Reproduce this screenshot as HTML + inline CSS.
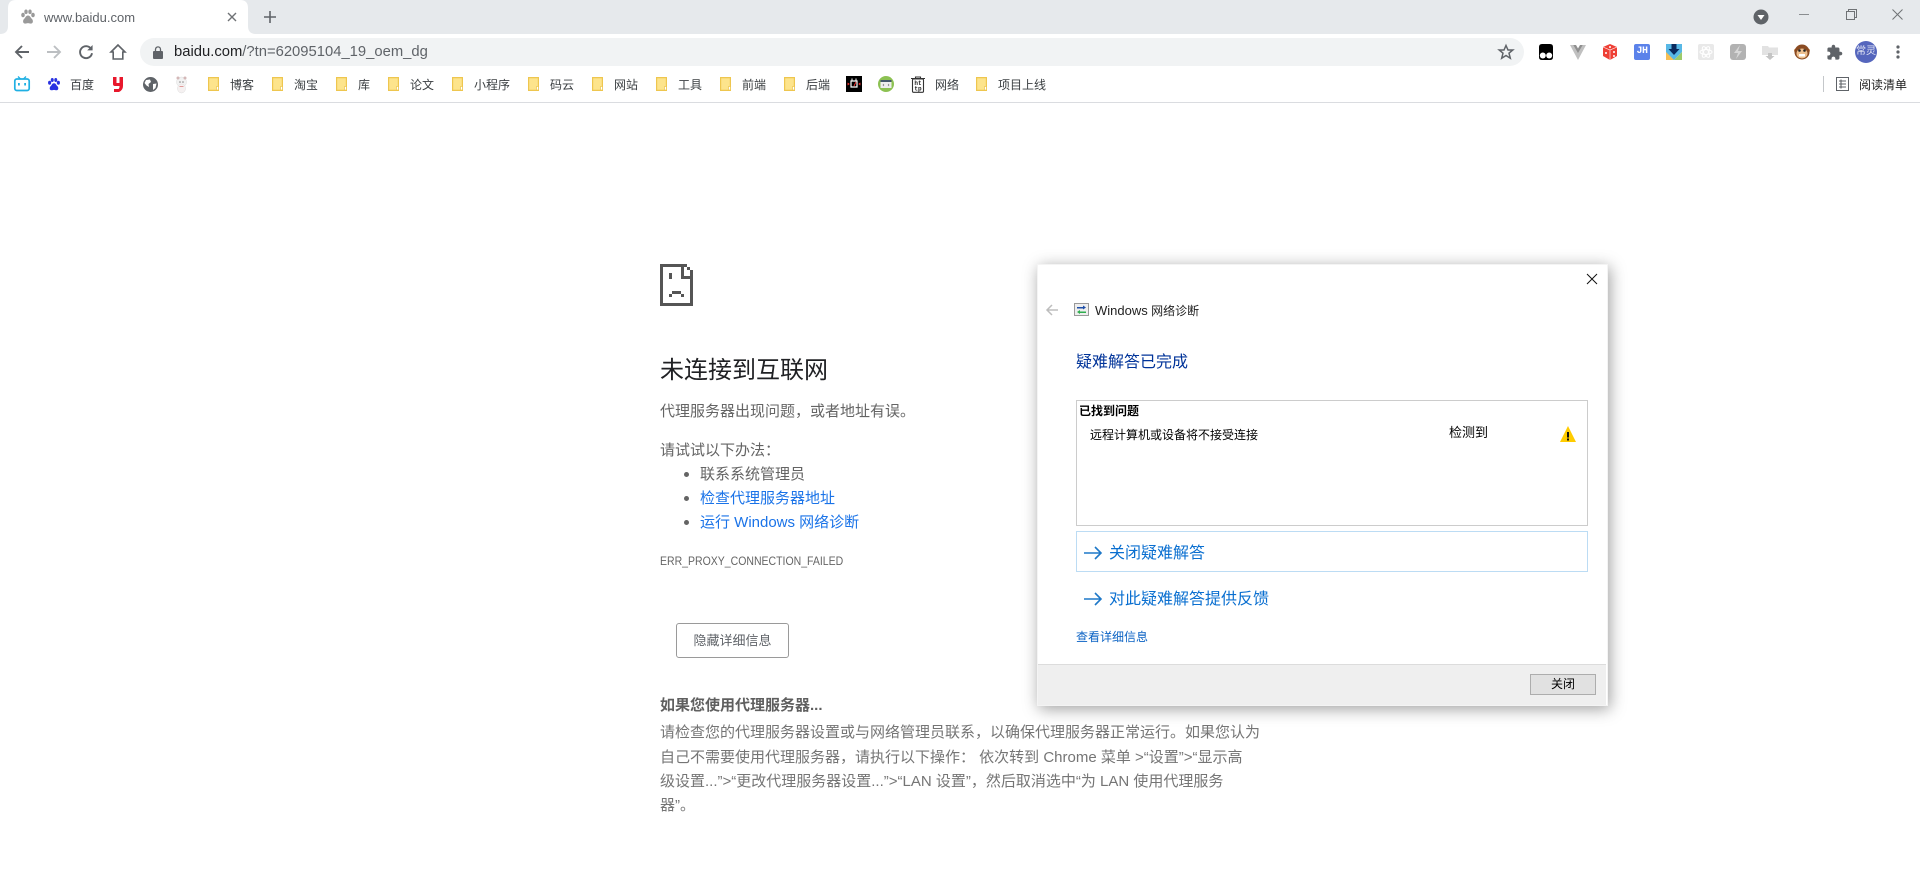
<!DOCTYPE html>
<html lang="zh-CN">
<head>
<meta charset="utf-8">
<title>www.baidu.com</title>
<style>
html,body{margin:0;padding:0;width:1920px;height:871px;overflow:hidden;background:#fff;}
body{position:relative;font-family:"Liberation Sans","Noto Sans CJK SC",sans-serif;color:#333;}
.a{position:absolute;}
.t{position:absolute;white-space:nowrap;line-height:20px;height:20px;}
.b{font-size:12px;color:#3c4043;top:75px;}
svg{position:absolute;overflow:visible;display:block;}
.f{position:absolute;top:77px;width:11px;height:14px;}
.g{color:#646464;font-size:15px;}
.l{color:#1a73e8;}
.p{font-size:15px;color:#757575;left:660px;}
</style>
</head>
<body>
<!-- tab strip -->
<div class="a" style="left:0;top:0;width:1920px;height:34px;background:#e6e9ec"></div>
<svg style="left:0;top:0" width="260" height="34"><path d="M0 34Q8 34 8 26V8Q8 0 16 0H240Q248 0 248 8V26Q248 34 256 34Z" fill="#fff"/></svg>
<!-- favicon paw -->
<svg style="left:20px;top:9px" width="16" height="16" viewBox="0 0 16 16" fill="#9a9a9a"><ellipse cx="3" cy="6" rx="1.8" ry="2.3"/><ellipse cx="6" cy="2.8" rx="1.7" ry="2.3"/><ellipse cx="10" cy="2.8" rx="1.7" ry="2.3"/><ellipse cx="13" cy="6" rx="1.8" ry="2.3"/><path d="M8 6.5C5.8 6.500 5.600 8.600 4.200 9.800 2.600 11.200 2.600 14.500 5 14.600 6.200 14.700 6.800 14.100 8 14.100 9.200 14.100 9.800 14.700 11 14.600 13.400 14.500 13.400 11.200 11.800 9.800 10.400 8.600 10.200 6.500 8 6.500Z"/></svg>
<div class="t" style="left:44px;top:8px;font-size:13px;color:#5f6368">www.baidu.com</div>
<svg style="left:227px;top:12px" width="10" height="10" viewBox="0 0 10 10"><path d="M1 1L9 9M9 1L1 9" stroke="#6f7275" stroke-width="1.4"/></svg>
<svg style="left:264px;top:11px" width="12" height="12" viewBox="0 0 12 12"><path d="M6 0V12M0 6H12" stroke="#5f6368" stroke-width="1.6"/></svg>
<!-- window controls -->
<svg style="left:1753px;top:9px" width="16" height="16" viewBox="0 0 16 16"><circle cx="8" cy="8" r="7.5" fill="#5f6368"/><path d="M4.5 6H11.5L8 11Z" fill="#fff"/></svg>
<div class="a" style="left:1799px;top:14px;width:10px;height:1px;background:#8a8d90"></div>
<svg style="left:1846px;top:9px" width="11" height="11" viewBox="0 0 11 11" fill="none" stroke="#6f7275"><rect x=".5" y="2.5" width="8" height="8"/><path d="M2.5 2.5V.5H10.5V8.5H8.5"/></svg>
<svg style="left:1892px;top:9px" width="11" height="11" viewBox="0 0 11 11"><path d="M.5 .5L10.5 10.5M10.5 .5L.5 10.5" stroke="#6f7275"/></svg>
<!-- toolbar -->
<svg style="left:14px;top:44px" width="16" height="16" viewBox="0 0 16 16"><path d="M15 8H2M8 2L2 8L8 14" fill="none" stroke="#5f6368" stroke-width="1.9"/></svg>
<svg style="left:46px;top:44px" width="16" height="16" viewBox="0 0 16 16"><path d="M1 8H14M8 2L14 8L8 14" fill="none" stroke="#bcbfc2" stroke-width="1.9"/></svg>
<svg style="left:78px;top:44px" width="16" height="16" viewBox="0 0 16 16"><path d="M13.200 5A6 6 0 1 0 14 9.200" fill="none" stroke="#5f6368" stroke-width="1.9"/><path d="M14.600 1V6.400H9.200Z" fill="#5f6368"/></svg>
<svg style="left:110px;top:44px" width="16" height="16" viewBox="0 0 16 16"><path d="M8 1L1 8H3.200V15H12.800V8H15Z" fill="none" stroke="#5f6368" stroke-width="1.6"/></svg>
<div class="a" style="left:140px;top:38px;width:1384px;height:28px;border-radius:14px;background:#f1f3f4"></div>
<svg style="left:153px;top:46px" width="10" height="13" viewBox="0 0 10 13"><rect x="0" y="5" width="10" height="8" rx="1" fill="#5f6368"/><path d="M2.500 5.500V3.400A2.500 2.500 0 0 1 7.500 3.400V5.500" fill="none" stroke="#5f6368" stroke-width="1.3"/></svg>
<div class="t" style="left:174px;top:42px;font-size:14.8px;color:#5f6368"><span style="color:#202124">baidu.com</span>/?tn=62095104_19_oem_dg</div>
<svg style="left:1498px;top:44px" width="16" height="16" viewBox="0 0 16 16"><path d="M8 1.500L10 6H14.800L11 9.200L12.300 14.200L8 11.500L3.700 14.200L5 9.200L1.200 6H6Z" fill="none" stroke="#5f6368" stroke-width="1.5"/></svg>
<!-- extensions -->
<svg style="left:1538px;top:44px" width="16" height="16" viewBox="0 0 16 16"><path d="M1 3Q1 0 4 0H12Q15 0 15 3V13Q15 16 12 16H4Q1 16 1 13Z" fill="#000"/><circle cx="4.800" cy="11.500" r="3" fill="#fff"/><circle cx="11.200" cy="11.500" r="3" fill="#fff"/></svg>
<svg style="left:1570px;top:45px" width="16" height="15" viewBox="0 0 16 15"><path d="M0 0H3.200L8 8.300L12.800 0H16L8 15Z" fill="#c0c0c0"/><path d="M3.200 0H6L8 3.500L10 0H12.800L8 8.300Z" fill="#8f8f8f"/></svg>
<svg style="left:1602px;top:44px" width="16" height="16" viewBox="0 0 16 16"><path d="M8 0L15 3V12L8 16L1 12V3Z" fill="#ee3f35"/><path d="M1 3L8 6L15 3M8 6V16" stroke="#fff" stroke-width=".6" fill="none"/><circle cx="4" cy="9" r="1" fill="#fff"/><circle cx="12" cy="8" r="1" fill="#fff"/><circle cx="12" cy="12" r="1" fill="#fff"/><circle cx="8" cy="3" r="1" fill="#fff"/></svg>
<div class="a" style="left:1634px;top:44px;width:16px;height:16px;border-radius:2px;background:#5b82ea;color:#fff;font:bold 10px/16px 'Liberation Mono',monospace;text-align:center;letter-spacing:-.5px">JH</div>
<svg style="left:1666px;top:44px" width="16" height="16" viewBox="0 0 16 16"><path d="M0 0H16V8L8 16H0Z" fill="#58b8e6"/><path d="M0 8V16H8Z" fill="#f6bf55"/><path d="M16 8V16H8Z" fill="#9ccb6b"/><path d="M5.500 0H10.500V5H13.500L8 11L2.500 5H5.500Z" fill="#0a2a5e"/></svg>
<svg style="left:1698px;top:44px" width="16" height="16" viewBox="0 0 16 16"><rect width="16" height="16" rx="2" fill="#e9e9e9"/><g fill="none" stroke="#fff" stroke-width="1"><ellipse cx="8" cy="8" rx="6" ry="2.500"/><ellipse cx="8" cy="8" rx="6" ry="2.500" transform="rotate(60 8 8)"/><ellipse cx="8" cy="8" rx="6" ry="2.500" transform="rotate(120 8 8)"/></g></svg>
<svg style="left:1730px;top:44px" width="16" height="16" viewBox="0 0 16 16"><rect width="16" height="16" rx="3" fill="#b2b2b2"/><path d="M10 1L4 9H8L6 15L12 7H8Z" fill="#d8d8d8"/></svg>
<svg style="left:1762px;top:44px" width="16" height="16" viewBox="0 0 16 16"><path d="M0 2H6L7 3.500H16V11H0Z" fill="#e2e2e2"/><path d="M6 9H10V12H12.500L8 16L3.500 12H6Z" fill="#c4c4c4"/></svg>
<svg style="left:1794px;top:44px" width="16" height="16" viewBox="0 0 16 16"><circle cx="1.800" cy="6.500" r="1.800" fill="#c98a52"/><circle cx="14.200" cy="6.500" r="1.800" fill="#c98a52"/><circle cx="8" cy="8" r="7.500" fill="#8a4b22"/><ellipse cx="8" cy="9.500" rx="5.500" ry="5" fill="#eec08f"/><circle cx="5.500" cy="6.500" r="1.300" fill="#222"/><circle cx="10.500" cy="6.500" r="1.300" fill="#222"/><rect x="5" y="10" width="6" height="2.500" fill="#fff"/></svg>
<svg style="left:1826px;top:44px" width="17" height="17" viewBox="0 0 24 24"><path d="M20.500 11H19V7c0-1.100-.9-2-2-2h-4V3.500C13 2.120 11.880 1 10.500 1S8 2.120 8 3.500V5H4c-1.100 0-1.990.9-1.990 2v3.800H3.500c1.490 0 2.700 1.210 2.700 2.700s-1.210 2.700-2.700 2.700H2V20c0 1.100.9 2 2 2h3.800v-1.500c0-1.490 1.210-2.700 2.700-2.700 1.490 0 2.700 1.210 2.700 2.700V22H17c1.100 0 2-.9 2-2v-4h1.500c1.380 0 2.500-1.120 2.500-2.500S21.880 11 20.500 11z" fill="#5f6368"/></svg>
<div class="a" style="left:1855px;top:41px;width:22px;height:22px;border-radius:50%;background:#5566bd;color:#e8eaf6;font-size:10px;line-height:22px;text-align:center">常灵</div>
<svg style="left:1896px;top:45px" width="4" height="14" viewBox="0 0 4 14" fill="#5f6368"><circle cx="2" cy="2" r="1.600"/><circle cx="2" cy="7" r="1.600"/><circle cx="2" cy="12" r="1.600"/></svg>
<!-- bookmarks -->
<svg style="left:14px;top:76px" width="16" height="16" viewBox="0 0 16 16"><path d="M4 .5L6.500 3M12 .5L9.500 3" stroke="#20b0e3" stroke-width="1.300"/><rect x=".8" y="3" width="14.400" height="11.500" rx="2" fill="none" stroke="#20b0e3" stroke-width="1.700"/><rect x="4" y="7" width="1.800" height="2.500" fill="#20b0e3"/><rect x="10.200" y="7" width="1.800" height="2.500" fill="#20b0e3"/></svg>
<svg style="left:47px;top:77px" width="14" height="15" viewBox="0 0 16 16" fill="#2932e1"><ellipse cx="3" cy="6" rx="1.800" ry="2.300"/><ellipse cx="6" cy="2.800" rx="1.700" ry="2.300"/><ellipse cx="10" cy="2.800" rx="1.700" ry="2.300"/><ellipse cx="13" cy="6" rx="1.800" ry="2.300"/><path d="M8 6.500C5.800 6.500 5.600 8.600 4.200 9.800 2.600 11.200 2.600 14.500 5 14.600 6.200 14.700 6.800 14.100 8 14.100 9.200 14.100 9.800 14.700 11 14.600 13.400 14.500 13.400 11.200 11.800 9.800 10.400 8.600 10.200 6.500 8 6.500Z"/></svg>
<div class="t b" style="left:70px">百度</div>
<svg style="left:113px;top:77px" width="10" height="15" viewBox="0 0 10 15"><path d="M0 0H3.500V6H6.500V0H10V9Q10 13 6 15H1V12H5.500Q6.500 11.500 6.500 9H2Q0 9 0 7Z" fill="#e8182c"/></svg>
<svg style="left:143px;top:77px" width="15" height="15" viewBox="0 0 15 15"><circle cx="7.500" cy="7.500" r="7.500" fill="#5f6368"/><path d="M3 3L7 2.500L8 5L5.500 7L6 10L3.500 8.500L1.500 6ZM10 7L13.500 6.500L12.500 11L10 13Z" fill="#fff"/></svg>
<svg style="left:175px;top:76px" width="13" height="17" viewBox="0 0 13 17"><ellipse cx="6.500" cy="6" rx="5" ry="5" fill="#f2f2f2" stroke="#ddd" stroke-width=".5"/><ellipse cx="6.500" cy="12.500" rx="4" ry="4.500" fill="#f5f1f1" stroke="#ddd" stroke-width=".5"/><circle cx="3" cy="2" r="1.500" fill="#d4b8b8"/><circle cx="10" cy="2" r="1.500" fill="#d4b8b8"/><circle cx="5" cy="6" r=".8" fill="#888"/><circle cx="8" cy="6" r=".8" fill="#888"/><rect x="4.500" y="10" width="4" height="1" fill="#e09a98"/></svg>

<svg class="f" style="left:208px" viewBox="0 0 11 14"><path d="M.6 .6H10.400V13.400H.6Z" fill="#fde48c" stroke="#eec64f" stroke-width="1.200"/><rect x="8.500" y="9.500" width="2" height="3.500" fill="#fff" stroke="#eec64f" stroke-width=".7"/></svg>
<div class="t b" style="left:230px">博客</div>
<svg class="f" style="left:272px" viewBox="0 0 11 14"><path d="M.6 .6H10.400V13.400H.6Z" fill="#fde48c" stroke="#eec64f" stroke-width="1.200"/><rect x="8.500" y="9.500" width="2" height="3.500" fill="#fff" stroke="#eec64f" stroke-width=".7"/></svg>
<div class="t b" style="left:294px">淘宝</div>
<svg class="f" style="left:336px" viewBox="0 0 11 14"><path d="M.6 .6H10.400V13.400H.6Z" fill="#fde48c" stroke="#eec64f" stroke-width="1.200"/><rect x="8.500" y="9.500" width="2" height="3.500" fill="#fff" stroke="#eec64f" stroke-width=".7"/></svg>
<div class="t b" style="left:358px">库</div>
<svg class="f" style="left:388px" viewBox="0 0 11 14"><path d="M.6 .6H10.400V13.400H.6Z" fill="#fde48c" stroke="#eec64f" stroke-width="1.200"/><rect x="8.500" y="9.500" width="2" height="3.500" fill="#fff" stroke="#eec64f" stroke-width=".7"/></svg>
<div class="t b" style="left:410px">论文</div>
<svg class="f" style="left:452px" viewBox="0 0 11 14"><path d="M.6 .6H10.400V13.400H.6Z" fill="#fde48c" stroke="#eec64f" stroke-width="1.200"/><rect x="8.500" y="9.500" width="2" height="3.500" fill="#fff" stroke="#eec64f" stroke-width=".7"/></svg>
<div class="t b" style="left:474px">小程序</div>
<svg class="f" style="left:528px" viewBox="0 0 11 14"><path d="M.6 .6H10.400V13.400H.6Z" fill="#fde48c" stroke="#eec64f" stroke-width="1.200"/><rect x="8.500" y="9.500" width="2" height="3.500" fill="#fff" stroke="#eec64f" stroke-width=".7"/></svg>
<div class="t b" style="left:550px">码云</div>
<svg class="f" style="left:592px" viewBox="0 0 11 14"><path d="M.6 .6H10.400V13.400H.6Z" fill="#fde48c" stroke="#eec64f" stroke-width="1.200"/><rect x="8.500" y="9.500" width="2" height="3.500" fill="#fff" stroke="#eec64f" stroke-width=".7"/></svg>
<div class="t b" style="left:614px">网站</div>
<svg class="f" style="left:656px" viewBox="0 0 11 14"><path d="M.6 .6H10.400V13.400H.6Z" fill="#fde48c" stroke="#eec64f" stroke-width="1.200"/><rect x="8.500" y="9.500" width="2" height="3.500" fill="#fff" stroke="#eec64f" stroke-width=".7"/></svg>
<div class="t b" style="left:678px">工具</div>
<svg class="f" style="left:720px" viewBox="0 0 11 14"><path d="M.6 .6H10.400V13.400H.6Z" fill="#fde48c" stroke="#eec64f" stroke-width="1.200"/><rect x="8.500" y="9.500" width="2" height="3.500" fill="#fff" stroke="#eec64f" stroke-width=".7"/></svg>
<div class="t b" style="left:742px">前端</div>
<svg class="f" style="left:784px" viewBox="0 0 11 14"><path d="M.6 .6H10.400V13.400H.6Z" fill="#fde48c" stroke="#eec64f" stroke-width="1.200"/><rect x="8.500" y="9.500" width="2" height="3.500" fill="#fff" stroke="#eec64f" stroke-width=".7"/></svg>
<div class="t b" style="left:806px">后端</div>
<svg style="left:846px;top:76px" width="16" height="16" viewBox="0 0 16 16"><rect width="16" height="16" fill="#000"/><path d="M5 5H11V11H5Z" fill="none" stroke="#fff" stroke-width="1.200"/><path d="M6 2.500V4.500M10 2.500V4.500" stroke="#fff"/><path d="M1.500 7L3 8L1.500 9M14.500 7L13 8L14.500 9M8 10L10 6" stroke="#f33" fill="none" stroke-width=".9"/></svg>
<svg style="left:878px;top:76px" width="16" height="16" viewBox="0 0 16 16"><circle cx="8" cy="8" r="8" fill="#8cc152"/><rect x="2.500" y="4" width="11" height="8" fill="#eee"/><rect x="2.500" y="4" width="11" height="2" fill="#44586b"/><path d="M6 8L5 9L6 10M10 8L11 9L10 10" stroke="#777" fill="none" stroke-width=".7"/></svg>
<svg style="left:911px;top:76px" width="14" height="17" viewBox="0 0 14 17"><path d="M0 2.500H14M4.500 2.500V1H9.500V2.500" stroke="#333" fill="none" stroke-width="1.100"/><rect x="1.500" y="3" width="11" height="13.300" rx="1" fill="#fff" stroke="#333" stroke-width="1.100"/><text x="7" y="9" font-size="6" font-weight="bold" font-family="Liberation Mono" text-anchor="middle" fill="#222">ht</text><text x="7" y="14.500" font-size="6" font-weight="bold" font-family="Liberation Mono" text-anchor="middle" fill="#222">tp</text></svg>
<div class="t b" style="left:935px">网络</div>
<svg class="f" style="left:976px" viewBox="0 0 11 14"><path d="M.6 .6H10.400V13.400H.6Z" fill="#fde48c" stroke="#eec64f" stroke-width="1.200"/><rect x="8.500" y="9.500" width="2" height="3.500" fill="#fff" stroke="#eec64f" stroke-width=".7"/></svg>
<div class="t b" style="left:998px">项目上线</div>

<div class="a" style="left:1823px;top:76px;width:1px;height:16px;background:#c4c7ca"></div>
<svg style="left:1836px;top:77px" width="13" height="14" viewBox="0 0 13 14" fill="none" stroke="#5f6368"><rect x=".5" y=".5" width="12" height="13" stroke-width="1"/><path d="M3 4H10M3 7H10M3 10H10M5 2.500V11.500" stroke-width="1.100"/></svg>
<div class="t b" style="left:1859px;color:#222">阅读清单</div>
<div class="a" style="left:0;top:102px;width:1920px;height:1px;background:#dadce0"></div>

<!-- error page -->
<svg style="left:660px;top:264px" width="33" height="42" viewBox="0 0 33 42" fill="#555"><rect x="0" y="0" width="3" height="42"/><rect x="0" y="0" width="27" height="3"/><rect x="21" y="0" width="3" height="15"/><rect x="21" y="12" width="12" height="3"/><rect x="27" y="3" width="3" height="3"/><rect x="30" y="6" width="3" height="36"/><rect x="0" y="39" width="33" height="3"/><rect x="9" y="9" width="3" height="6"/><rect x="12" y="27" width="9" height="3"/><rect x="9" y="30" width="3" height="3"/><rect x="21" y="30" width="3" height="3"/></svg>
<div class="t" style="left:660px;top:356px;font-size:24px;line-height:30px;height:30px;color:#202124">未连接到互联网</div>
<div class="t g" style="left:660px;top:402px">代理服务器出现问题，或者地址有误。</div>
<div class="t g" style="left:660px;top:441px">请试试以下办法：</div>
<div class="a" style="left:684px;top:472px;width:5px;height:5px;border-radius:50%;background:#646464"></div>
<div class="t g" style="left:700px;top:465px">联系系统管理员</div>
<div class="a" style="left:684px;top:496px;width:5px;height:5px;border-radius:50%;background:#646464"></div>
<div class="t g l" style="left:700px;top:489px">检查代理服务器地址</div>
<div class="a" style="left:684px;top:520px;width:5px;height:5px;border-radius:50%;background:#646464"></div>
<div class="t g l" style="left:700px;top:513px">运行 Windows 网络诊断</div>
<div class="t" style="left:660px;top:551px;font-size:12px;color:#646464;transform:scaleX(.875);transform-origin:0 0">ERR_PROXY_CONNECTION_FAILED</div>
<div class="a" style="left:676px;top:623px;width:111px;height:33px;border:1px solid #9a9a9a;border-radius:3px;background:#fff;color:#5f6368;font-size:13px;line-height:33px;text-align:center">隐藏详细信息</div>
<div class="t" style="left:660px;top:696px;font-size:15px;font-weight:bold;color:#5f5f5f">如果您使用代理服务器...</div>
<div class="t p" style="top:723px">请检查您的代理服务器设置或与网络管理员联系，以确保代理服务器正常运行。如果您认为</div>
<div class="t p" style="top:748px">自己不需要使用代理服务器，请执行以下操作： 依次转到 Chrome 菜单 &gt;“设置”&gt;“显示高</div>
<div class="t p" style="top:772px">级设置...”&gt;“更改代理服务器设置...”&gt;“LAN 设置”，然后取消选中“为 LAN 使用代理服务</div>
<div class="t p" style="top:796px">器”。</div>

<!-- dialog -->
<div class="a" style="left:1037px;top:264px;width:569px;height:440px;background:#fff;border:1px solid #f4f4f4;box-shadow:2px 3px 15px rgba(0,0,0,.38)"></div>
<svg style="left:1587px;top:274px" width="10" height="10" viewBox="0 0 10 10"><path d="M0 0L10 10M10 0L0 10" stroke="#111" stroke-width="1"/></svg>
<svg style="left:1046px;top:304px" width="12" height="12" viewBox="0 0 12 12"><path d="M12 6H1.500M6 1L1 6L6 11" fill="none" stroke="#bdbdbd" stroke-width="1.500"/></svg>
<svg style="left:1074px;top:303px" width="15" height="13" viewBox="0 0 15 13"><rect x=".5" y=".5" width="14" height="12" fill="#eee" stroke="#999"/><path d="M3 4H9V2.500L12 4.500L9 6.500V5.500H3Z" fill="#1f4fa8"/><path d="M12 8.500H6V7L3 9L6 11V10H12Z" fill="#2fae4f"/></svg>
<div class="t" style="left:1095px;top:301px;font-size:12px;color:#222"><span style="font-size:13px">Windows</span> 网络诊断</div>
<div class="t" style="left:1076px;top:353px;font-size:16px;color:#003399">疑难解答已完成</div>
<div class="a" style="left:1076px;top:400px;width:510px;height:124px;border:1px solid #ccc"></div>
<div class="t" style="left:1079px;top:401px;font-size:12px;font-weight:bold;color:#000">已找到问题</div>
<div class="t" style="left:1090px;top:425px;font-size:12px;color:#000">远程计算机或设备将不接受连接</div>
<div class="t" style="left:1449px;top:423px;font-size:13px;color:#000">检测到</div>
<svg style="left:1560px;top:426px" width="16" height="16" viewBox="0 0 16 16"><path d="M8 0L16 16H0Z" fill="#fc0"/><rect x="7" y="6" width="2" height="5.500" fill="#111"/><rect x="7" y="12.500" width="2" height="2" fill="#111"/></svg>
<div class="a" style="left:1076px;top:531px;width:510px;height:39px;border:1px solid #bcdcf4"></div>
<svg style="left:1084px;top:546px" width="18" height="14" viewBox="0 0 18 14"><path d="M0 7H17M11 1L17 7L11 13" fill="none" stroke="#1e78c8" stroke-width="1.600"/></svg>
<div class="t" style="left:1109px;top:544px;font-size:16px;color:#0a6fd0">关闭疑难解答</div>
<svg style="left:1084px;top:592px" width="18" height="14" viewBox="0 0 18 14"><path d="M0 7H17M11 1L17 7L11 13" fill="none" stroke="#1e78c8" stroke-width="1.600"/></svg>
<div class="t" style="left:1109px;top:590px;font-size:16px;color:#0a6fd0">对此疑难解答提供反馈</div>
<div class="t" style="left:1076px;top:627px;font-size:12px;color:#0a62c4">查看详细信息</div>
<div class="a" style="left:1038px;top:664px;width:568px;height:40px;background:#efefef;border-top:1px solid #dcdcdc"></div>
<div class="a" style="left:1530px;top:674px;width:64px;height:19px;background:#e1e1e1;border:1px solid #adadad;font-size:12px;line-height:19px;text-align:center;color:#000">关闭</div>
</body>
</html>
